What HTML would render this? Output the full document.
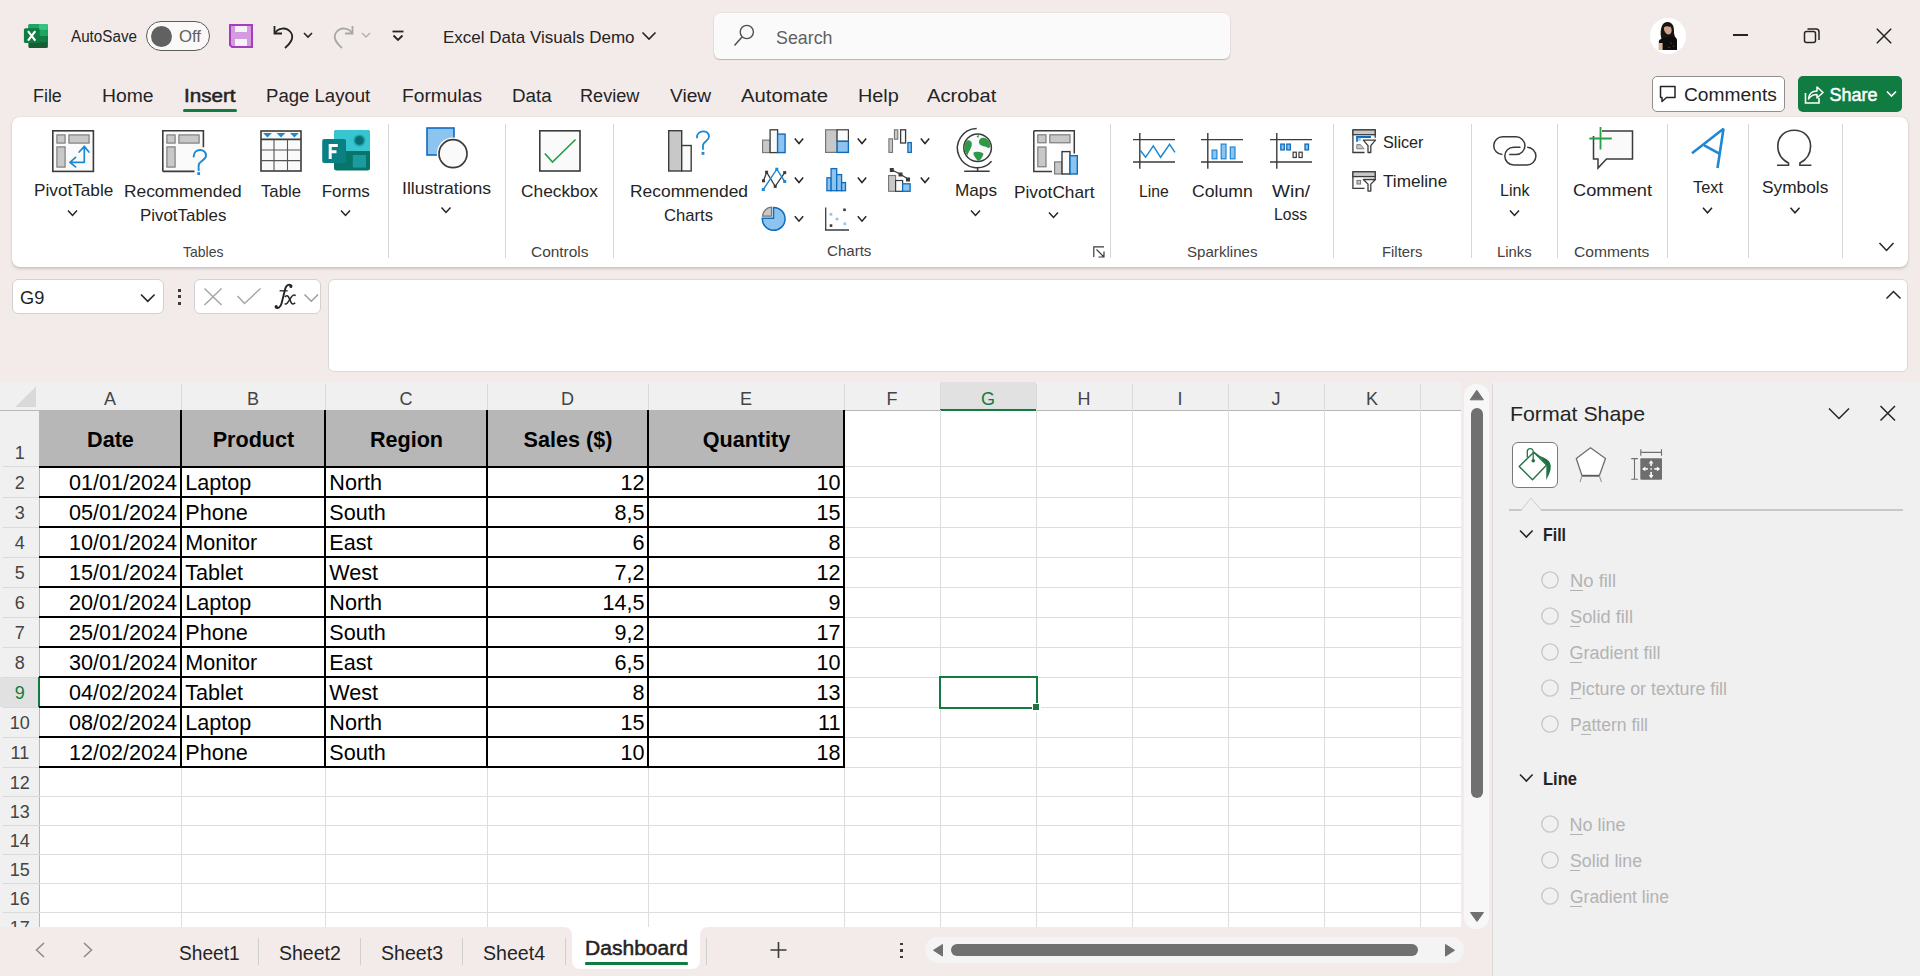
<!DOCTYPE html><html><head><meta charset="utf-8"><style>
html,body{margin:0;padding:0;}
body{width:1920px;height:976px;overflow:hidden;position:relative;background:#F3EBEA;font-family:"Liberation Sans",sans-serif;}
.a{position:absolute;}
.t{position:absolute;white-space:nowrap;line-height:1;font-family:"Liberation Sans",sans-serif;transform-origin:0 0;}
svg.full{position:absolute;left:0;top:0;}
</style></head><body>
<svg class="a" style="left:23px;top:23px;" width="26" height="26" viewBox="0 0 26 26">
<rect x="5.4" y="1" width="19.5" height="24" rx="1.6" fill="#185C37"/>
<path d="M5.4 7 V2.6 A1.6 1.6 0 0 1 7 1 H23.3 A1.6 1.6 0 0 1 24.9 2.6 V7 Z" fill="#33C481"/>
<path d="M5.4 7 V2.6 A1.6 1.6 0 0 1 7 1 H16 V7 Z" fill="#21A366"/>
<rect x="5.4" y="6.9" width="19.5" height="6.2" fill="#21A366"/>
<rect x="5.4" y="13" width="19.5" height="6.3" fill="#107C41"/>
<rect x="0.9" y="5.2" width="15.8" height="14.8" rx="1.6" fill="#107C41"/>
<path d="M5 8.2 L12.3 17.6 M12.3 8.2 L5 17.6" stroke="#fff" stroke-width="2.2" fill="none"/>
</svg><div class="t" style="left:71.00px;top:28.65px;font-size:16px;color:#242424;transform:scaleX(0.9513);">AutoSave</div><div class="a" style="left:146px;top:21px;width:62px;height:28px;border:1px solid #5c5c5c;border-radius:15px;background:#fbf8f8"></div><div class="a" style="left:151px;top:25.5px;width:21px;height:21px;background:#616161;border-radius:50%"></div><div class="t" style="left:179.00px;top:28.65px;font-size:16px;color:#616161;transform:scaleX(1.0454);">Off</div><svg class="a" style="left:229px;top:24px;" width="24" height="24" viewBox="0 0 24 24">
<path d="M1 1 H23 V23 H3 L1 21 Z" fill="#D59BE0" stroke="#A43FBB" stroke-width="2"/>
<rect x="6" y="2" width="12" height="6" fill="#f6f0f7"/>
<rect x="6" y="15" width="12" height="7" fill="#f6f0f7"/>
</svg><svg class="a" style="left:272px;top:23px;" width="26" height="26" viewBox="0 0 26 26"><path d="M2.5 3 V10.5 H10" stroke="#242424" stroke-width="1.8" fill="none"/>
<path d="M3 10.2 C6 5 14 3.5 18.5 9 C22 13.5 20 19 13 25" stroke="#242424" stroke-width="1.8" fill="none"/></svg><svg class="a" style="left:303px;top:31px;" width="10" height="8" viewBox="0 0 10 8"><path d="M1 2 L5 6 L9 2" stroke="#242424" stroke-width="1.6" fill="none"/></svg><svg class="a" style="left:329px;top:23px;" width="26" height="26" viewBox="0 0 26 26"><path d="M23.5 3 V10.5 H16" stroke="#a8a8a8" stroke-width="1.8" fill="none"/>
<path d="M23 10.2 C20 5 12 3.5 7.5 9 C4 13.5 6 19 13 25" stroke="#a8a8a8" stroke-width="1.8" fill="none"/></svg><svg class="a" style="left:361px;top:31px;" width="10" height="8" viewBox="0 0 10 8"><path d="M1 2 L5 6 L9 2" stroke="#b0b0b0" stroke-width="1.4" fill="none"/></svg><svg class="a" style="left:391px;top:30px;" width="14" height="13" viewBox="0 0 14 13"><path d="M1.5 1.5 H12.5" stroke="#242424" stroke-width="1.8"/><path d="M2.5 5.5 L7 10 L11.5 5.5" stroke="#242424" stroke-width="1.8" fill="none"/></svg><div class="t" style="left:443.00px;top:28.51px;font-size:17px;color:#242424;">Excel Data Visuals Demo</div><svg class="a" style="left:641px;top:31px;" width="16" height="10" viewBox="0 0 16 10"><path d="M1.5 1.5 L8 8 L14.5 1.5" stroke="#242424" stroke-width="1.6" fill="none"/></svg><div class="a" style="left:713.5px;top:12.5px;width:516.5px;height:46.5px;background:#FAFAFA;border-radius:6px;box-shadow:0 1px 1px rgba(0,0,0,0.22),0 0 0 0.5px rgba(0,0,0,0.08)"></div><svg class="a" style="left:732px;top:23px;" width="24" height="26" viewBox="0 0 24 26"><circle cx="14.8" cy="9" r="6.6" stroke="#505050" stroke-width="1.4" fill="none"/><path d="M10 14 L2.5 22.5" stroke="#505050" stroke-width="1.5"/></svg><div class="t" style="left:775.80px;top:27.71px;font-size:19px;color:#616161;transform:scaleX(0.9386);">Search</div><div class="a" style="left:1650px;top:18px;width:36px;height:36px;background:#fff;border-radius:50%"></div><svg class="a" style="left:1650px;top:18px;" width="36" height="36" viewBox="0 0 36 36">
<path d="M11 19 C10 12 11.5 4.5 17 4 C22.5 3.5 24.5 9 24 15 C24.5 18 25.5 20 26 22 L12 23 Z" fill="#1a1412"/>
<ellipse cx="17.8" cy="11.3" rx="3.7" ry="5.3" transform="rotate(-18 17.8 11.3)" fill="#d0a38c"/>
<path d="M13.5 6.5 C15 4.8 18.5 4.6 20.5 6.5 L20 9 C18 8 15.5 8 13.8 9.5 Z" fill="#1a1412"/>
<path d="M8.9 32 V23 C9.5 21 12 20.5 15 20 L19.5 18.3 C23 18 27 18.5 27 22.5 V32 Z" fill="#0e0c0c"/>
<rect x="8.9" y="25" width="3.7" height="7" fill="#dcb490"/>
<circle cx="21" cy="25" r="0.6" fill="#8a6a3a"/><circle cx="23.5" cy="28" r="0.6" fill="#8a6a3a"/><circle cx="19" cy="29.5" r="0.6" fill="#8a6a3a"/>
</svg><div class="a" style="left:1732.5px;top:34px;width:15px;height:1.6px;background:#242424"></div><svg class="a" style="left:1803px;top:27px;" width="18" height="18" viewBox="0 0 18 18"><rect x="1.5" y="4.5" width="11" height="11" rx="2" stroke="#242424" stroke-width="1.5" fill="none"/><path d="M4.5 2 H13 A3 3 0 0 1 16 5 V13" stroke="#242424" stroke-width="1.5" fill="none"/></svg><svg class="a" style="left:1876px;top:28px;" width="16" height="16" viewBox="0 0 16 16"><path d="M0.8 0.8 L15.2 15.2 M15.2 0.8 L0.8 15.2" stroke="#242424" stroke-width="1.5"/></svg><div class="t" style="left:32.90px;top:87.46px;font-size:18px;color:#242424;transform:scaleX(0.9930);">File</div><div class="t" style="left:101.70px;top:87.46px;font-size:18px;color:#242424;transform:scaleX(1.0747);">Home</div><div class="t" style="left:184.00px;top:87.46px;font-size:18px;color:#242424;transform:scaleX(1.1463);-webkit-text-stroke:0.5px #242424;">Insert</div><div class="t" style="left:265.80px;top:87.46px;font-size:18px;color:#242424;transform:scaleX(1.0309);">Page Layout</div><div class="t" style="left:402.00px;top:87.46px;font-size:18px;color:#242424;transform:scaleX(1.0665);">Formulas</div><div class="t" style="left:511.50px;top:87.46px;font-size:18px;color:#242424;transform:scaleX(1.0442);">Data</div><div class="t" style="left:580.40px;top:87.46px;font-size:18px;color:#242424;transform:scaleX(1.0065);">Review</div><div class="t" style="left:670.00px;top:87.46px;font-size:18px;color:#242424;transform:scaleX(1.0649);">View</div><div class="t" style="left:741.00px;top:87.46px;font-size:18px;color:#242424;transform:scaleX(1.1293);">Automate</div><div class="t" style="left:857.80px;top:87.46px;font-size:18px;color:#242424;transform:scaleX(1.1022);">Help</div><div class="t" style="left:927.00px;top:87.46px;font-size:18px;color:#242424;transform:scaleX(1.1172);">Acrobat</div><div class="a" style="left:183px;top:109px;width:54px;height:3px;background:#107C41;border-radius:2px"></div><div class="a" style="left:1652.4px;top:76.3px;width:133px;height:35.5px;box-sizing:border-box;border:1px solid #8f8f8f;border-radius:5px;background:#fff"></div><svg class="a" style="left:1659px;top:85px;" width="18" height="18" viewBox="0 0 18 18"><path d="M1.5 1.5 H16 V12.5 H7.5 L3 16.5 V12.5 H1.5 Z" stroke="#242424" stroke-width="1.5" fill="none" stroke-linejoin="round"/></svg><div class="t" style="left:1683.90px;top:86.36px;font-size:18px;color:#242424;transform:scaleX(1.0665);">Comments</div><div class="a" style="left:1798.2px;top:76.3px;width:103.6px;height:35.5px;background:#107C41;border-radius:5px"></div><svg class="a" style="left:1803px;top:84px;" width="21" height="21" viewBox="0 0 21 21"><path d="M2.5 9 V19 H16 V14" stroke="#fff" stroke-width="1.6" fill="none"/>
<path d="M5.5 15 C6 9 10 7 14 7 V3 L20 8.5 L14 14 V10.5 C10.5 10.5 7.5 12 5.5 15 Z" stroke="#fff" stroke-width="1.5" fill="none" stroke-linejoin="round"/></svg><div class="t" style="left:1829.60px;top:86.36px;font-size:18px;color:#fff;-webkit-text-stroke:0.5px #fff;">Share</div><svg class="a" style="left:1886px;top:90px;" width="11" height="8" viewBox="0 0 11 8"><path d="M1 1.5 L5.5 6 L10 1.5" stroke="#fff" stroke-width="1.6" fill="none"/></svg><div class="a" style="left:12.4px;top:117px;width:1895.6px;height:150px;background:#fff;border-radius:8px;box-shadow:0 1.5px 3px rgba(0,0,0,0.16),0 0 1px rgba(0,0,0,0.12)"></div><div class="a" style="left:388.0px;top:124px;width:1px;height:134px;background:#d6d6d6"></div><div class="a" style="left:505.2px;top:124px;width:1px;height:134px;background:#d6d6d6"></div><div class="a" style="left:613.0px;top:124px;width:1px;height:134px;background:#d6d6d6"></div><div class="a" style="left:1109.9px;top:124px;width:1px;height:134px;background:#d6d6d6"></div><div class="a" style="left:1333.1px;top:124px;width:1px;height:134px;background:#d6d6d6"></div><div class="a" style="left:1470.8px;top:124px;width:1px;height:134px;background:#d6d6d6"></div><div class="a" style="left:1557.0px;top:124px;width:1px;height:134px;background:#d6d6d6"></div><div class="a" style="left:1667.1px;top:124px;width:1px;height:134px;background:#d6d6d6"></div><div class="a" style="left:1748.0px;top:124px;width:1px;height:134px;background:#d6d6d6"></div><div class="a" style="left:1842.2px;top:124px;width:1px;height:134px;background:#d6d6d6"></div><div class="t" style="left:33.70px;top:182.11px;font-size:17px;color:#242424;transform:scaleX(1.0111);">PivotTable</div><div class="t" style="left:123.80px;top:182.61px;font-size:17px;color:#242424;transform:scaleX(1.0211);">Recommended</div><div class="t" style="left:139.60px;top:206.61px;font-size:17px;color:#242424;transform:scaleX(0.9939);">PivotTables</div><div class="t" style="left:261.00px;top:182.61px;font-size:17px;color:#242424;transform:scaleX(0.9843);">Table</div><div class="t" style="left:321.70px;top:182.61px;font-size:17px;color:#242424;">Forms</div><div class="t" style="left:182.60px;top:245.22px;font-size:14.5px;color:#424242;transform:scaleX(0.9639);">Tables</div><div class="t" style="left:402.00px;top:179.61px;font-size:17px;color:#242424;transform:scaleX(1.0352);">Illustrations</div><div class="t" style="left:521.00px;top:182.61px;font-size:17px;color:#242424;transform:scaleX(1.0186);">Checkbox</div><div class="t" style="left:530.50px;top:245.32px;font-size:14.5px;color:#424242;transform:scaleX(1.0650);">Controls</div><div class="t" style="left:630.00px;top:182.61px;font-size:17px;color:#242424;transform:scaleX(1.0237);">Recommended</div><div class="t" style="left:664.00px;top:206.61px;font-size:17px;color:#242424;transform:scaleX(0.9787);">Charts</div><div class="t" style="left:955.00px;top:182.31px;font-size:17px;color:#242424;transform:scaleX(1.0104);">Maps</div><div class="t" style="left:1014.00px;top:183.91px;font-size:17px;color:#242424;transform:scaleX(1.0156);">PivotChart</div><div class="t" style="left:827.00px;top:244.22px;font-size:14.5px;color:#424242;transform:scaleX(1.0397);">Charts</div><div class="t" style="left:1139.00px;top:182.51px;font-size:17px;color:#242424;transform:scaleX(0.9257);">Line</div><div class="t" style="left:1191.70px;top:182.51px;font-size:17px;color:#242424;transform:scaleX(1.0380);">Column</div><div class="t" style="left:1272.00px;top:182.51px;font-size:17px;color:#242424;transform:scaleX(1.1176);">Win/</div><div class="t" style="left:1274.00px;top:205.61px;font-size:17px;color:#242424;transform:scaleX(0.9190);">Loss</div><div class="t" style="left:1186.50px;top:245.42px;font-size:14.5px;color:#424242;transform:scaleX(1.0414);">Sparklines</div><div class="t" style="left:1382.50px;top:133.81px;font-size:17px;color:#242424;transform:scaleX(0.9528);">Slicer</div><div class="t" style="left:1382.50px;top:172.61px;font-size:17px;color:#242424;transform:scaleX(1.0093);">Timeline</div><div class="t" style="left:1381.60px;top:245.42px;font-size:14.5px;color:#424242;transform:scaleX(1.0236);">Filters</div><div class="t" style="left:1500.00px;top:182.31px;font-size:17px;color:#242424;transform:scaleX(0.9492);">Link</div><div class="t" style="left:1496.80px;top:245.42px;font-size:14.5px;color:#424242;transform:scaleX(1.0222);">Links</div><div class="t" style="left:1573.00px;top:182.31px;font-size:17px;color:#242424;transform:scaleX(1.0722);">Comment</div><div class="t" style="left:1574.00px;top:245.42px;font-size:14.5px;color:#424242;transform:scaleX(1.0757);">Comments</div><div class="t" style="left:1693.00px;top:179.21px;font-size:17px;color:#242424;transform:scaleX(0.9623);">Text</div><div class="t" style="left:1761.70px;top:179.21px;font-size:17px;color:#242424;transform:scaleX(1.0171);">Symbols</div><div class="a" style="left:12.3px;top:279px;width:151.4px;height:34.75px;box-sizing:border-box;background:#fff;border:1px solid #d1d1d1;border-radius:6px"></div><div class="t" style="left:19.70px;top:288.56px;font-size:18px;color:#1f1f1f;transform:scaleX(1.0121);">G9</div><div class="a" style="left:177.5px;top:288.5px;width:3px;height:3px;background:#3b3b3b"></div><div class="a" style="left:177.5px;top:295.0px;width:3px;height:3px;background:#3b3b3b"></div><div class="a" style="left:177.5px;top:301.5px;width:3px;height:3px;background:#3b3b3b"></div><div class="a" style="left:194px;top:279px;width:127.4px;height:34.75px;box-sizing:border-box;background:#fff;border:1px solid #d1d1d1;border-radius:6px"></div><div class="a" style="left:328px;top:279px;width:1580px;height:92.5px;box-sizing:border-box;background:#fff;border:1px solid #d9d9d9;border-radius:6px"></div><div class="a" style="left:0px;top:382px;width:1461px;height:28px;background:#F0F0F0"></div><div class="a" style="left:0px;top:410px;width:39px;height:517px;background:#F0F0F0"></div><div class="a" style="left:39px;top:410px;width:1422px;height:517px;background:#fff"></div><div class="a" style="left:940px;top:382px;width:96px;height:28px;background:#E1E1E1"></div><div class="a" style="left:0px;top:677px;width:39px;height:30px;background:#E1E1E1"></div><div class="a" style="left:180.5px;top:384px;width:1px;height:26px;background:#dadada"></div><div class="a" style="left:324.5px;top:384px;width:1px;height:26px;background:#dadada"></div><div class="a" style="left:486.5px;top:384px;width:1px;height:26px;background:#dadada"></div><div class="a" style="left:647.5px;top:384px;width:1px;height:26px;background:#dadada"></div><div class="a" style="left:843.5px;top:384px;width:1px;height:26px;background:#dadada"></div><div class="a" style="left:939.5px;top:384px;width:1px;height:26px;background:#dadada"></div><div class="a" style="left:1035.5px;top:384px;width:1px;height:26px;background:#dadada"></div><div class="a" style="left:1131.5px;top:384px;width:1px;height:26px;background:#dadada"></div><div class="a" style="left:1227.5px;top:384px;width:1px;height:26px;background:#dadada"></div><div class="a" style="left:1323.5px;top:384px;width:1px;height:26px;background:#dadada"></div><div class="a" style="left:1419.5px;top:384px;width:1px;height:26px;background:#dadada"></div><div class="a" style="left:0px;top:409.5px;width:1461px;height:1px;background:#b8b8b8"></div><div class="a" style="left:3px;top:466.2px;width:36px;height:1px;background:#dadada"></div><div class="a" style="left:3px;top:496.5px;width:36px;height:1px;background:#dadada"></div><div class="a" style="left:3px;top:526.5px;width:36px;height:1px;background:#dadada"></div><div class="a" style="left:3px;top:556.5px;width:36px;height:1px;background:#dadada"></div><div class="a" style="left:3px;top:586.5px;width:36px;height:1px;background:#dadada"></div><div class="a" style="left:3px;top:616.5px;width:36px;height:1px;background:#dadada"></div><div class="a" style="left:3px;top:646.5px;width:36px;height:1px;background:#dadada"></div><div class="a" style="left:3px;top:676.5px;width:36px;height:1px;background:#dadada"></div><div class="a" style="left:3px;top:706.5px;width:36px;height:1px;background:#dadada"></div><div class="a" style="left:3px;top:736.5px;width:36px;height:1px;background:#dadada"></div><div class="a" style="left:3px;top:766.5px;width:36px;height:1px;background:#dadada"></div><div class="a" style="left:3px;top:796.0px;width:36px;height:1px;background:#dadada"></div><div class="a" style="left:3px;top:825.0px;width:36px;height:1px;background:#dadada"></div><div class="a" style="left:3px;top:854.0px;width:36px;height:1px;background:#dadada"></div><div class="a" style="left:3px;top:883.0px;width:36px;height:1px;background:#dadada"></div><div class="a" style="left:3px;top:912.0px;width:36px;height:1px;background:#dadada"></div><div class="a" style="left:38.5px;top:410px;width:1px;height:517px;background:#b8b8b8"></div><div class="a" style="left:940px;top:408.5px;width:96px;height:2px;background:#107C41"></div><div class="a" style="left:37.5px;top:677px;width:2px;height:30px;background:#107C41"></div><div class="a" style="left:180.5px;top:410px;width:1px;height:517px;background:#dedede"></div><div class="a" style="left:324.5px;top:410px;width:1px;height:517px;background:#dedede"></div><div class="a" style="left:486.5px;top:410px;width:1px;height:517px;background:#dedede"></div><div class="a" style="left:647.5px;top:410px;width:1px;height:517px;background:#dedede"></div><div class="a" style="left:843.5px;top:410px;width:1px;height:517px;background:#dedede"></div><div class="a" style="left:939.5px;top:410px;width:1px;height:517px;background:#dedede"></div><div class="a" style="left:1035.5px;top:410px;width:1px;height:517px;background:#dedede"></div><div class="a" style="left:1131.5px;top:410px;width:1px;height:517px;background:#dedede"></div><div class="a" style="left:1227.5px;top:410px;width:1px;height:517px;background:#dedede"></div><div class="a" style="left:1323.5px;top:410px;width:1px;height:517px;background:#dedede"></div><div class="a" style="left:1419.5px;top:410px;width:1px;height:517px;background:#dedede"></div><div class="a" style="left:39px;top:466.2px;width:1422px;height:1px;background:#dedede"></div><div class="a" style="left:39px;top:496.5px;width:1422px;height:1px;background:#dedede"></div><div class="a" style="left:39px;top:526.5px;width:1422px;height:1px;background:#dedede"></div><div class="a" style="left:39px;top:556.5px;width:1422px;height:1px;background:#dedede"></div><div class="a" style="left:39px;top:586.5px;width:1422px;height:1px;background:#dedede"></div><div class="a" style="left:39px;top:616.5px;width:1422px;height:1px;background:#dedede"></div><div class="a" style="left:39px;top:646.5px;width:1422px;height:1px;background:#dedede"></div><div class="a" style="left:39px;top:676.5px;width:1422px;height:1px;background:#dedede"></div><div class="a" style="left:39px;top:706.5px;width:1422px;height:1px;background:#dedede"></div><div class="a" style="left:39px;top:736.5px;width:1422px;height:1px;background:#dedede"></div><div class="a" style="left:39px;top:766.5px;width:1422px;height:1px;background:#dedede"></div><div class="a" style="left:39px;top:796.0px;width:1422px;height:1px;background:#dedede"></div><div class="a" style="left:39px;top:825.0px;width:1422px;height:1px;background:#dedede"></div><div class="a" style="left:39px;top:854.0px;width:1422px;height:1px;background:#dedede"></div><div class="a" style="left:39px;top:883.0px;width:1422px;height:1px;background:#dedede"></div><div class="a" style="left:39px;top:912.0px;width:1422px;height:1px;background:#dedede"></div><div class="a" style="left:39px;top:410px;width:805px;height:56.7px;background:#B7B7B7"></div><div class="a" style="left:180px;top:410px;width:2px;height:358px;background:#000"></div><div class="a" style="left:324px;top:410px;width:2px;height:358px;background:#000"></div><div class="a" style="left:486px;top:410px;width:2px;height:358px;background:#000"></div><div class="a" style="left:647px;top:410px;width:2px;height:358px;background:#000"></div><div class="a" style="left:843px;top:410px;width:2px;height:358px;background:#000"></div><div class="a" style="left:39px;top:465.7px;width:806px;height:2px;background:#000"></div><div class="a" style="left:39px;top:496px;width:806px;height:2px;background:#000"></div><div class="a" style="left:39px;top:526px;width:806px;height:2px;background:#000"></div><div class="a" style="left:39px;top:556px;width:806px;height:2px;background:#000"></div><div class="a" style="left:39px;top:586px;width:806px;height:2px;background:#000"></div><div class="a" style="left:39px;top:616px;width:806px;height:2px;background:#000"></div><div class="a" style="left:39px;top:646px;width:806px;height:2px;background:#000"></div><div class="a" style="left:39px;top:676px;width:806px;height:2px;background:#000"></div><div class="a" style="left:39px;top:706px;width:806px;height:2px;background:#000"></div><div class="a" style="left:39px;top:736px;width:806px;height:2px;background:#000"></div><div class="a" style="left:39px;top:766px;width:806px;height:2px;background:#000"></div><div class="t" style="left:104.00px;top:389.76px;font-size:18px;color:#444444;">A</div><div class="t" style="left:247.00px;top:389.76px;font-size:18px;color:#444444;">B</div><div class="t" style="left:399.50px;top:389.76px;font-size:18px;color:#444444;">C</div><div class="t" style="left:561.00px;top:389.76px;font-size:18px;color:#444444;">D</div><div class="t" style="left:740.00px;top:389.76px;font-size:18px;color:#444444;">E</div><div class="t" style="left:886.50px;top:389.76px;font-size:18px;color:#444444;">F</div><div class="t" style="left:981.00px;top:389.76px;font-size:18px;color:#107C41;">G</div><div class="t" style="left:1077.50px;top:389.76px;font-size:18px;color:#444444;">H</div><div class="t" style="left:1177.50px;top:389.76px;font-size:18px;color:#444444;">I</div><div class="t" style="left:1271.50px;top:389.76px;font-size:18px;color:#444444;">J</div><div class="t" style="left:1366.00px;top:389.76px;font-size:18px;color:#444444;">K</div><div class="t" style="left:14.80px;top:443.96px;font-size:18px;color:#444444;">1</div><div class="t" style="left:14.80px;top:474.26px;font-size:18px;color:#444444;">2</div><div class="t" style="left:14.80px;top:504.26px;font-size:18px;color:#444444;">3</div><div class="t" style="left:14.80px;top:534.26px;font-size:18px;color:#444444;">4</div><div class="t" style="left:14.80px;top:564.26px;font-size:18px;color:#444444;">5</div><div class="t" style="left:14.80px;top:594.26px;font-size:18px;color:#444444;">6</div><div class="t" style="left:14.80px;top:624.26px;font-size:18px;color:#444444;">7</div><div class="t" style="left:14.80px;top:654.26px;font-size:18px;color:#444444;">8</div><div class="t" style="left:14.80px;top:684.26px;font-size:18px;color:#107C41;">9</div><div class="t" style="left:9.79px;top:714.26px;font-size:18px;color:#444444;">10</div><div class="t" style="left:10.46px;top:744.26px;font-size:18px;color:#444444;">11</div><div class="t" style="left:9.79px;top:773.76px;font-size:18px;color:#444444;">12</div><div class="t" style="left:9.79px;top:802.76px;font-size:18px;color:#444444;">13</div><div class="t" style="left:9.79px;top:831.76px;font-size:18px;color:#444444;">14</div><div class="t" style="left:9.79px;top:860.76px;font-size:18px;color:#444444;">15</div><div class="t" style="left:9.79px;top:889.76px;font-size:18px;color:#444444;">16</div><div class="t" style="left:9.79px;top:918.76px;font-size:18px;color:#444444;">17</div><div class="t" style="left:87.09px;top:428.71px;font-size:21.6px;color:#000;font-weight:bold;">Date</div><div class="t" style="left:212.70px;top:428.71px;font-size:21.6px;color:#000;font-weight:bold;">Product</div><div class="t" style="left:369.90px;top:428.71px;font-size:21.6px;color:#000;font-weight:bold;">Region</div><div class="t" style="left:523.58px;top:428.71px;font-size:21.6px;color:#000;font-weight:bold;">Sales ($)</div><div class="t" style="left:702.70px;top:428.71px;font-size:21.6px;color:#000;font-weight:bold;">Quantity</div><div class="t" style="left:68.91px;top:472.31px;font-size:21.6px;color:#000;">01/01/2024</div><div class="t" style="left:185.30px;top:472.31px;font-size:21.6px;color:#000;">Laptop</div><div class="t" style="left:329.30px;top:472.31px;font-size:21.6px;color:#000;">North</div><div class="t" style="left:620.48px;top:472.31px;font-size:21.6px;color:#000;">12</div><div class="t" style="left:816.48px;top:472.31px;font-size:21.6px;color:#000;">10</div><div class="t" style="left:68.91px;top:502.31px;font-size:21.6px;color:#000;">05/01/2024</div><div class="t" style="left:185.30px;top:502.31px;font-size:21.6px;color:#000;">Phone</div><div class="t" style="left:329.30px;top:502.31px;font-size:21.6px;color:#000;">South</div><div class="t" style="left:614.48px;top:502.31px;font-size:21.6px;color:#000;">8,5</div><div class="t" style="left:816.48px;top:502.31px;font-size:21.6px;color:#000;">15</div><div class="t" style="left:68.91px;top:532.31px;font-size:21.6px;color:#000;">10/01/2024</div><div class="t" style="left:185.30px;top:532.31px;font-size:21.6px;color:#000;">Monitor</div><div class="t" style="left:329.30px;top:532.31px;font-size:21.6px;color:#000;">East</div><div class="t" style="left:632.49px;top:532.31px;font-size:21.6px;color:#000;">6</div><div class="t" style="left:828.49px;top:532.31px;font-size:21.6px;color:#000;">8</div><div class="t" style="left:68.91px;top:562.31px;font-size:21.6px;color:#000;">15/01/2024</div><div class="t" style="left:185.30px;top:562.31px;font-size:21.6px;color:#000;">Tablet</div><div class="t" style="left:329.30px;top:562.31px;font-size:21.6px;color:#000;">West</div><div class="t" style="left:614.48px;top:562.31px;font-size:21.6px;color:#000;">7,2</div><div class="t" style="left:816.48px;top:562.31px;font-size:21.6px;color:#000;">12</div><div class="t" style="left:68.91px;top:592.31px;font-size:21.6px;color:#000;">20/01/2024</div><div class="t" style="left:185.30px;top:592.31px;font-size:21.6px;color:#000;">Laptop</div><div class="t" style="left:329.30px;top:592.31px;font-size:21.6px;color:#000;">North</div><div class="t" style="left:602.46px;top:592.31px;font-size:21.6px;color:#000;">14,5</div><div class="t" style="left:828.49px;top:592.31px;font-size:21.6px;color:#000;">9</div><div class="t" style="left:68.91px;top:622.31px;font-size:21.6px;color:#000;">25/01/2024</div><div class="t" style="left:185.30px;top:622.31px;font-size:21.6px;color:#000;">Phone</div><div class="t" style="left:329.30px;top:622.31px;font-size:21.6px;color:#000;">South</div><div class="t" style="left:614.48px;top:622.31px;font-size:21.6px;color:#000;">9,2</div><div class="t" style="left:816.48px;top:622.31px;font-size:21.6px;color:#000;">17</div><div class="t" style="left:68.91px;top:652.31px;font-size:21.6px;color:#000;">30/01/2024</div><div class="t" style="left:185.30px;top:652.31px;font-size:21.6px;color:#000;">Monitor</div><div class="t" style="left:329.30px;top:652.31px;font-size:21.6px;color:#000;">East</div><div class="t" style="left:614.48px;top:652.31px;font-size:21.6px;color:#000;">6,5</div><div class="t" style="left:816.48px;top:652.31px;font-size:21.6px;color:#000;">10</div><div class="t" style="left:68.91px;top:682.31px;font-size:21.6px;color:#000;">04/02/2024</div><div class="t" style="left:185.30px;top:682.31px;font-size:21.6px;color:#000;">Tablet</div><div class="t" style="left:329.30px;top:682.31px;font-size:21.6px;color:#000;">West</div><div class="t" style="left:632.49px;top:682.31px;font-size:21.6px;color:#000;">8</div><div class="t" style="left:816.48px;top:682.31px;font-size:21.6px;color:#000;">13</div><div class="t" style="left:68.91px;top:712.31px;font-size:21.6px;color:#000;">08/02/2024</div><div class="t" style="left:185.30px;top:712.31px;font-size:21.6px;color:#000;">Laptop</div><div class="t" style="left:329.30px;top:712.31px;font-size:21.6px;color:#000;">North</div><div class="t" style="left:620.48px;top:712.31px;font-size:21.6px;color:#000;">15</div><div class="t" style="left:818.08px;top:712.31px;font-size:21.6px;color:#000;">11</div><div class="t" style="left:68.91px;top:742.31px;font-size:21.6px;color:#000;">12/02/2024</div><div class="t" style="left:185.30px;top:742.31px;font-size:21.6px;color:#000;">Phone</div><div class="t" style="left:329.30px;top:742.31px;font-size:21.6px;color:#000;">South</div><div class="t" style="left:620.48px;top:742.31px;font-size:21.6px;color:#000;">10</div><div class="t" style="left:816.48px;top:742.31px;font-size:21.6px;color:#000;">18</div><div class="a" style="left:939px;top:676px;width:99px;height:33px;box-sizing:border-box;border:2px solid #107C41"></div><div class="a" style="left:1031.5px;top:702.5px;width:9px;height:9px;background:#fff"></div><div class="a" style="left:1033px;top:704px;width:6px;height:6px;background:#217346"></div><div class="a" style="left:1464px;top:384px;width:25px;height:545px;background:#F7F7F7;border-radius:12px"></div><div class="a" style="left:1471px;top:408px;width:12px;height:390px;background:#707070;border-radius:6px"></div><div class="a" style="left:0px;top:927px;width:1462px;height:49px;background:#F3EBEA"></div><div class="t" style="left:178.75px;top:942.57px;font-size:20px;color:#242424;transform:scaleX(0.9584);">Sheet1</div><div class="t" style="left:278.75px;top:942.57px;font-size:20px;color:#242424;transform:scaleX(0.9742);">Sheet2</div><div class="t" style="left:380.50px;top:942.57px;font-size:20px;color:#242424;transform:scaleX(0.9782);">Sheet3</div><div class="t" style="left:483.40px;top:942.57px;font-size:20px;color:#242424;transform:scaleX(0.9782);">Sheet4</div><div class="a" style="left:257.75px;top:937.5px;width:1px;height:27px;background:#cfcfcf"></div><div class="a" style="left:360.0px;top:937.5px;width:1px;height:27px;background:#cfcfcf"></div><div class="a" style="left:462.0px;top:937.5px;width:1px;height:27px;background:#cfcfcf"></div><div class="a" style="left:565.0px;top:937.5px;width:1px;height:27px;background:#cfcfcf"></div><div class="a" style="left:705.5px;top:937.5px;width:1px;height:27px;background:#cfcfcf"></div><svg class="a" style="left:0px;top:0px;" width="1920" height="976" viewBox="0 0 1920 976"><path d="M564 927 A8 8 0 0 1 572 935 V961 A8 8 0 0 0 580 969 H692 A8 8 0 0 0 700 961 V935 A8 8 0 0 1 708 927 Z" fill="#fff"/></svg><div class="t" style="left:585.00px;top:938.27px;font-size:20px;color:#242424;transform:scaleX(1.0528);-webkit-text-stroke:0.5px #242424;">Dashboard</div><div class="a" style="left:585px;top:962px;width:103px;height:3px;background:#107C41;border-radius:1px"></div><div class="a" style="left:899.5px;top:942.6px;width:3px;height:2.8px;background:#3b3b3b"></div><div class="a" style="left:899.5px;top:949.1px;width:3px;height:2.8px;background:#3b3b3b"></div><div class="a" style="left:899.5px;top:955.6px;width:3px;height:2.8px;background:#3b3b3b"></div><div class="a" style="left:925px;top:937.2px;width:539px;height:25.6px;background:#F4F4F4;border-radius:13px"></div><div class="a" style="left:951px;top:944px;width:467px;height:12px;background:#707070;border-radius:6px"></div><div class="a" style="left:1491.5px;top:382px;width:428.5px;height:594px;background:#F0F0F0"></div><div class="a" style="left:1491.5px;top:384px;width:1px;height:592px;background:#d8d8d8"></div><div class="t" style="left:1510.00px;top:402.72px;font-size:21px;color:#242424;transform:scaleX(1.0146);">Format Shape</div><div class="a" style="left:1512px;top:442px;width:45.8px;height:45.8px;box-sizing:border-box;background:#fff;border:1.2px solid #7a7a7a;border-radius:6px"></div><div class="t" style="left:1542.50px;top:525.21px;font-size:19px;color:#242424;font-weight:bold;transform:scaleX(0.8382);">Fill</div><div class="t" style="left:1569.50px;top:572.26px;font-size:18px;color:#b3b3b3;transform:scaleX(1.0220);">No fill</div><div class="a" style="left:1569.5px;top:589.8px;width:13px;height:1px;background:#b3b3b3"></div><div class="t" style="left:1569.50px;top:608.26px;font-size:18px;color:#b3b3b3;transform:scaleX(1.0157);">Solid fill</div><div class="a" style="left:1569.5px;top:625.8px;width:10px;height:1px;background:#b3b3b3"></div><div class="t" style="left:1569.50px;top:644.26px;font-size:18px;color:#b3b3b3;">Gradient fill</div><div class="a" style="left:1569.5px;top:661.8px;width:12px;height:1px;background:#b3b3b3"></div><div class="t" style="left:1569.50px;top:680.26px;font-size:18px;color:#b3b3b3;transform:scaleX(0.9871);">Picture or texture fill</div><div class="a" style="left:1569.5px;top:697.8px;width:11px;height:1px;background:#b3b3b3"></div><div class="t" style="left:1569.50px;top:716.26px;font-size:18px;color:#b3b3b3;transform:scaleX(0.9746);">Pattern fill</div><div class="a" style="left:1580.5px;top:733.8px;width:10px;height:1px;background:#b3b3b3"></div><div class="t" style="left:1542.80px;top:768.71px;font-size:19px;color:#242424;font-weight:bold;transform:scaleX(0.8706);">Line</div><div class="t" style="left:1569.50px;top:816.26px;font-size:18px;color:#b3b3b3;">No line</div><div class="a" style="left:1569.5px;top:833.8px;width:13px;height:1px;background:#b3b3b3"></div><div class="t" style="left:1569.50px;top:852.26px;font-size:18px;color:#b3b3b3;transform:scaleX(0.9857);">Solid line</div><div class="a" style="left:1569.5px;top:869.8px;width:10px;height:1px;background:#b3b3b3"></div><div class="t" style="left:1569.50px;top:888.26px;font-size:18px;color:#b3b3b3;transform:scaleX(0.9701);">Gradient line</div><div class="a" style="left:1569.5px;top:905.8px;width:12px;height:1px;background:#b3b3b3"></div><svg class="full" width="1920" height="976" viewBox="0 0 1920 976"><path d="M68.0 210.5 L72.5 215.5 L77.0 210.5" stroke="#242424" stroke-width="1.5" fill="none"/><path d="M341.0 210.5 L345.5 215.5 L350.0 210.5" stroke="#242424" stroke-width="1.5" fill="none"/><path d="M441.5 207.5 L446.0 212.5 L450.5 207.5" stroke="#242424" stroke-width="1.5" fill="none"/><path d="M794.8 138.5 L799.0 143.5 L803.2 138.5" stroke="#242424" stroke-width="1.5" fill="none"/><path d="M794.8 177.5 L799.0 182.5 L803.2 177.5" stroke="#242424" stroke-width="1.5" fill="none"/><path d="M794.8 216.2 L799.0 221.2 L803.2 216.2" stroke="#242424" stroke-width="1.5" fill="none"/><path d="M857.8 138.5 L862.0 143.5 L866.2 138.5" stroke="#242424" stroke-width="1.5" fill="none"/><path d="M857.8 177.5 L862.0 182.5 L866.2 177.5" stroke="#242424" stroke-width="1.5" fill="none"/><path d="M857.8 216.2 L862.0 221.2 L866.2 216.2" stroke="#242424" stroke-width="1.5" fill="none"/><path d="M920.8 138.5 L925.0 143.5 L929.2 138.5" stroke="#242424" stroke-width="1.5" fill="none"/><path d="M920.8 177.5 L925.0 182.5 L929.2 177.5" stroke="#242424" stroke-width="1.5" fill="none"/><path d="M971.0 210.5 L975.5 215.5 L980.0 210.5" stroke="#242424" stroke-width="1.5" fill="none"/><path d="M1049.0 212.5 L1053.5 217.5 L1058.0 212.5" stroke="#242424" stroke-width="1.5" fill="none"/><path d="M1093.8 257 V246.8 H1104" stroke="#3b3b3b" stroke-width="1.2" fill="none"/><path d="M1096.5 249.5 L1104 257 M1098.5 257 H1104 V251.5" stroke="#3b3b3b" stroke-width="1.2" fill="none"/><path d="M1510.0 210.5 L1514.5 215.5 L1519.0 210.5" stroke="#242424" stroke-width="1.5" fill="none"/><path d="M1703.0 207.8 L1707.5 212.8 L1712.0 207.8" stroke="#242424" stroke-width="1.5" fill="none"/><path d="M1790.5 207.8 L1795.0 212.8 L1799.5 207.8" stroke="#242424" stroke-width="1.5" fill="none"/><path d="M1879.5 243 L1886.5 250.5 L1893.5 243" stroke="#242424" stroke-width="1.5" fill="none"/><rect x="52.8" y="130.8" width="40.6" height="40.6" fill="#fafafa" stroke="#3b3b3b" stroke-width="1.6"/><rect x="56.9" y="134.9" width="8.2" height="8.2" fill="#c8c8c8" stroke="#757575" stroke-width="1.1"/><rect x="68.9" y="134.9" width="20.2" height="8.2" fill="#c8c8c8" stroke="#757575" stroke-width="1.1"/><rect x="56.9" y="146.9" width="8.2" height="20.2" fill="#c8c8c8" stroke="#757575" stroke-width="1.1"/><path d="M84.3 146.4 V162.3 H69.9 M79.15 152 L84.3 146.4 L88.9 152 M75.6 157.4 L69.9 162.3 L75.6 166.9" stroke="#1E88D3" stroke-width="1.7" fill="none" stroke-linecap="round" stroke-linejoin="round"/><path d="M162.8 130.8 H203.4 V171.4 H162.8 V130.8 Z" fill="#fafafa"/><path d="M162.8 171.4 V130.8 H203.4 V147.2 M162.8 171.4 H194.5" stroke="#3b3b3b" stroke-width="1.6" fill="none"/><rect x="166.9" y="134.9" width="8.2" height="8.2" fill="#c8c8c8" stroke="#757575" stroke-width="1.1"/><rect x="178.9" y="134.9" width="20.2" height="8.2" fill="#c8c8c8" stroke="#757575" stroke-width="1.1"/><rect x="166.9" y="146.9" width="8.2" height="20.2" fill="#c8c8c8" stroke="#757575" stroke-width="1.1"/><path d="M193.7 156.6 C193.7 148 206 148 206 155.5 C206 159.5 200.5 161 199 164 C198.5 165.5 198.5 168 198.7 170" stroke="#1E88D3" stroke-width="2" fill="none" stroke-linecap="round"/><rect x="197.3" y="172.2" width="2.8" height="2.8" fill="#1E88D3"/><rect x="261" y="131" width="40" height="40" fill="#fafafa" stroke="#3b3b3b" stroke-width="1.6"/><path d="M261 139.4 H301" stroke="#3b3b3b" stroke-width="1.6"/><path d="M261 150 H301 M261 160.6 H301 M274 139.4 V171 M287.5 139.4 V171" stroke="#555" stroke-width="1.1"/><path d="M263.1 133 H271.9 L267.5 137.6 Z" fill="#1E88D3"/><path d="M276.6 133 H285.4 L281.0 137.6 Z" fill="#1E88D3"/><path d="M290.0 133 H298.8 L294.4 137.6 Z" fill="#1E88D3"/><rect x="334" y="130" width="36" height="40.5" rx="2.5" fill="#077568"/><path d="M334 151 V132.5 A2.5 2.5 0 0 1 336.5 130 H367.5 A2.5 2.5 0 0 1 370 132.5 V151 Z" fill="#37C6D0"/><circle cx="359.4" cy="140.4" r="6" fill="#1FA3AC"/><circle cx="359.4" cy="140.4" r="4.3" fill="#0B6E72"/><rect x="352.8" y="155" width="13.2" height="12.6" fill="#1A9BA1"/><rect x="322.2" y="139.1" width="23.8" height="23.8" rx="2" fill="#0A7F84"/><path d="M330.2 159 V145.5 H337.8 M330.2 151.8 H336.5" stroke="#fff" stroke-width="3" fill="none"/><rect x="427" y="128" width="27" height="27" fill="#8DC3EF" stroke="#0F6CBD" stroke-width="1.6"/><circle cx="453" cy="153.7" r="16.2" fill="#fff"/><circle cx="453" cy="153.7" r="14" fill="#fafafa" stroke="#3b3b3b" stroke-width="1.7"/><rect x="539.8" y="130.8" width="40.2" height="40.2" fill="#fafafa" stroke="#3b3b3b" stroke-width="1.6"/><path d="M544.8 153.5 L552.5 162 L575.5 139.5" stroke="#2C9E4A" stroke-width="1.7" fill="none"/><rect x="668.7" y="130.7" width="13" height="40.3" fill="#c8c8c8" stroke="#3b3b3b" stroke-width="1.4"/><rect x="681.7" y="145.5" width="9.5" height="25.5" fill="#fafafa" stroke="#3b3b3b" stroke-width="1.4"/><path d="M697 137.5 C697 129.5 709 129.5 709 136.5 C709 140.5 704 141.5 703 145 V149" stroke="#1E88D3" stroke-width="1.8" fill="none" stroke-linecap="round"/><rect x="701.6" y="152" width="2.8" height="2.8" fill="#1E88D3"/><rect x="762.6" y="140.1" width="7.5" height="12.5" fill="#c8c8c8" stroke="#757575" stroke-width="1.1"/><rect x="770.1" y="129.8" width="7.5" height="22.8" fill="#fafafa" stroke="#3b3b3b" stroke-width="1.3"/><rect x="777.6" y="134.1" width="7.5" height="18.5" fill="#8DC3EF" stroke="#0F6CBD" stroke-width="1.4"/><rect x="825.6" y="129.8" width="11.5" height="22.6" fill="#c8c8c8" stroke="#757575" stroke-width="1.2"/><rect x="837.1" y="129.8" width="11.3" height="11.5" fill="#fafafa" stroke="#3b3b3b" stroke-width="1.2"/><rect x="837.1" y="141.3" width="11.3" height="11.1" fill="#8DC3EF" stroke="#0F6CBD" stroke-width="1.4"/><rect x="888.9" y="138.8" width="3.6" height="13.6" fill="#c8c8c8" stroke="#757575" stroke-width="1.1"/><rect x="894.4" y="129.8" width="3.4" height="9.4" fill="#c8c8c8" stroke="#757575" stroke-width="1.1"/><rect x="900.6" y="129.8" width="5" height="13.2" fill="#fafafa" stroke="#3b3b3b" stroke-width="1.3"/><rect x="907.9" y="142.6" width="3.4" height="9.8" fill="#8DC3EF" stroke="#0F6CBD" stroke-width="1.3"/><path d="M763.5 180.8 L766.6 172.2 L775.2 186.4 L784.7 172.6" stroke="#3b3b3b" stroke-width="1.3" fill="none"/><rect x="762" y="179.3" width="3" height="3" fill="#3b3b3b"/><rect x="765.1" y="170.7" width="3" height="3" fill="#3b3b3b"/><rect x="773.7" y="184.9" width="3" height="3" fill="#3b3b3b"/><rect x="783.2" y="171.1" width="3" height="3" fill="#3b3b3b"/><path d="M763.3 189.5 L776.8 169.2 L784.7 181.5" stroke="#1E88D3" stroke-width="1.4" fill="none"/><rect x="761.8" y="188" width="3" height="3" fill="#1E88D3"/><rect x="775.3" y="167.7" width="3" height="3" fill="#1E88D3"/><rect x="783.2" y="180" width="3" height="3" fill="#1E88D3"/><rect x="826.9" y="177.8" width="4.2" height="12.9" fill="#8DC3EF" stroke="#0F6CBD" stroke-width="1.3"/><rect x="831.1" y="168.6" width="5.6" height="22.1" fill="#8DC3EF" stroke="#0F6CBD" stroke-width="1.3"/><rect x="836.7" y="174.6" width="4.9" height="16.1" fill="#8DC3EF" stroke="#0F6CBD" stroke-width="1.3"/><rect x="841.6" y="182.6" width="3.9" height="8.1" fill="#8DC3EF" stroke="#0F6CBD" stroke-width="1.3"/><rect x="888.6" y="175.5" width="7" height="15.8" fill="#c8c8c8" stroke="#757575" stroke-width="1.1"/><rect x="895.6" y="180.5" width="7" height="10.8" fill="#fafafa" stroke="#3b3b3b" stroke-width="1.2"/><rect x="902.6" y="183.8" width="7.5" height="7.5" fill="#8DC3EF" stroke="#0F6CBD" stroke-width="1.3"/><path d="M892 170 L900 174 L908 179" stroke="#3b3b3b" stroke-width="1.3" fill="none"/><rect x="889.8" y="168" width="4" height="4" fill="#3b3b3b"/><rect x="898.5" y="172.5" width="4" height="4" fill="#3b3b3b"/><rect x="906" y="177.5" width="4" height="4" fill="#3b3b3b"/><path d="M773.5 218.2 V207.5 A11.4 11.4 0 1 1 762.3 218.2 Z" fill="#8DC3EF" stroke="#0F6CBD" stroke-width="1.5"/><path d="M771.5 216.2 H762.5 A9.5 9.5 0 0 1 771.5 207.2 Z" fill="#c8c8c8" stroke="#757575" stroke-width="1.2"/><path d="M825.7 207.5 V230 H849" stroke="#3b3b3b" stroke-width="1.3" fill="none"/><rect x="843.2" y="208.5" width="2.6" height="2.6" fill="#3b3b3b"/><rect x="829.7" y="224.3" width="2.6" height="2.6" fill="#3b3b3b"/><rect x="829.5" y="213" width="2.8" height="2.6" fill="#8DC3EF"/><circle cx="837" cy="219" r="1.6" fill="#8DC3EF"/><rect x="843.5" y="222.5" width="2.6" height="2.6" fill="#8DC3EF"/><circle cx="977.6" cy="147.7" r="13.8" fill="#fafafa" stroke="#3b3b3b" stroke-width="1.5"/><path d="M976.7 128.5 A19.6 19.6 0 1 0 991.6 161.2" stroke="#3b3b3b" stroke-width="1.5" fill="none"/><path d="M977.6 167.3 V171.3 M964.2 171.3 H989.7" stroke="#3b3b3b" stroke-width="1.5" fill="none"/><path d="M964.5 146 C965 141 968 138 971.5 142 C973 147 969 150 967.5 155.5 C965 153 964 150 964.5 146 Z" fill="#2E9A48"/><path d="M979 142 C979 137 986 136 989.5 142 C991 146 990 150 986.5 147 C982 146 979 145 979 142 Z" fill="#2E9A48"/><path d="M973.5 152.5 C976 151 982 151.5 983.5 154 C982 158 980 161 978 161 C975.5 158 973 155 973.5 152.5 Z" fill="#2E9A48"/><path d="M976.5 136.5 L978.8 134.5 L978.5 138 Z" fill="#2E9A48"/><path d="M1033.8 130.8 H1074.3 V153.5 M1033.8 130.8 V171.4 H1052" stroke="#3b3b3b" stroke-width="1.5" fill="#fafafa"/><rect x="1037.8" y="134.8" width="8.2" height="8" fill="#c8c8c8" stroke="#757575" stroke-width="1.1"/><rect x="1049.8" y="134.8" width="20.2" height="8" fill="#c8c8c8" stroke="#757575" stroke-width="1.1"/><rect x="1037.8" y="147" width="8.2" height="19.8" fill="#c8c8c8" stroke="#757575" stroke-width="1.1"/><rect x="1054.6" y="161.9" width="7.4" height="12.1" fill="#c8c8c8" stroke="#757575" stroke-width="1.1"/><rect x="1062" y="151.6" width="8" height="22.4" fill="#fafafa" stroke="#3b3b3b" stroke-width="1.4"/><rect x="1070" y="155.7" width="7.3" height="18.3" fill="#8DC3EF" stroke="#0F6CBD" stroke-width="1.4"/><path d="M1133.0 139.6 H1175.0 M1133.0 162 H1175.0 M1139.8 133.1 V168.8" stroke="#3b3b3b" stroke-width="1.4"/><path d="M1201.0 139.6 H1243.0 M1201.0 162 H1243.0 M1207.8 133.1 V168.8" stroke="#3b3b3b" stroke-width="1.4"/><path d="M1270.0 139.6 H1312.0 M1270.0 162 H1312.0 M1276.8 133.1 V168.8" stroke="#3b3b3b" stroke-width="1.4"/><path d="M1140.4 150.5 L1145.6 157.3 L1153.3 145.8 L1160.6 157.3 L1169.6 144.3 L1175 152.3" stroke="#1E88D3" stroke-width="1.5" fill="none"/><rect x="1212.1" y="150.1" width="4.8" height="8.7" fill="#8DC3EF" stroke="#1E88D3" stroke-width="1.2"/><rect x="1221.2" y="144.1" width="4.8" height="14.7" fill="#8DC3EF" stroke="#1E88D3" stroke-width="1.2"/><rect x="1230.3" y="147.0" width="4.7" height="11.8" fill="#8DC3EF" stroke="#1E88D3" stroke-width="1.2"/><rect x="1280.8" y="144.1" width="3.5" height="5.8" fill="#8DC3EF" stroke="#0F6CBD" stroke-width="1.3"/><rect x="1286.8" y="144.1" width="3.5" height="5.8" fill="#8DC3EF" stroke="#0F6CBD" stroke-width="1.3"/><rect x="1305.0" y="144.1" width="3.5" height="5.8" fill="#8DC3EF" stroke="#0F6CBD" stroke-width="1.3"/><rect x="1293.1" y="152.2" width="3.2" height="5.3" fill="#fafafa" stroke="#3b3b3b" stroke-width="1.2"/><rect x="1299.0" y="152.2" width="3.2" height="5.3" fill="#fafafa" stroke="#3b3b3b" stroke-width="1.2"/><path d="M1352.9 129.9 H1375.2 V137.7 M1352.9 129.9 V152.5 H1364.5" stroke="#3b3b3b" stroke-width="1.3" fill="#fafafa"/><rect x="1352.9" y="129.9" width="22.3" height="4.8" fill="#c8c8c8" stroke="#3b3b3b" stroke-width="1.3"/><path d="M1363.3 140.2 H1375.5 L1370.8 145.7 V152.5 H1368 V145.7 Z" fill="#fafafa" stroke="#3b3b3b" stroke-width="1.3" stroke-linejoin="round"/><path d="M1357 141.8 V137 H1371" stroke="#0F6CBD" stroke-width="1.8" fill="none"/><rect x="1357.8" y="137.8" width="3" height="3" fill="#8DC3EF"/><path d="M1356.8 148.8 V144.6 H1360.5 L1364 148.8 Z" fill="#c8c8c8" stroke="#757575" stroke-width="0.9"/><path d="M1352.9 171.8 H1375.2 V179.6 M1352.9 171.8 V188.4 H1364.5" stroke="#3b3b3b" stroke-width="1.3" fill="#fafafa"/><rect x="1352.9" y="171.8" width="22.3" height="4.8" fill="#c8c8c8" stroke="#3b3b3b" stroke-width="1.3"/><path d="M1363.3 179.5 H1375.5 L1370.8 184.1 V191.1 H1368 V184.1 Z" fill="#fafafa" stroke="#3b3b3b" stroke-width="1.3" stroke-linejoin="round"/><rect x="1357" y="180.4" width="3.6" height="3.6" fill="#c8c8c8" stroke="#757575" stroke-width="1"/><path d="M1502.4 154.6 A8.9 8.9 0 0 1 1502.9 136.8 H1516 A8.9 8.9 0 0 1 1516 154.6 H1509.2" stroke="#3b3b3b" stroke-width="1.5" fill="none"/><path d="M1520.5 147.2 H1513.7 A8.9 8.9 0 0 0 1513.7 165 H1526.8 A8.9 8.9 0 0 0 1527.2 147.2" stroke="#3b3b3b" stroke-width="1.5" fill="none"/><path d="M1593.5 136 V159 H1598 V168 L1606.5 159 H1632.5 V131 H1602" stroke="#3b3b3b" stroke-width="1.5" fill="#fafafa" stroke-linejoin="miter"/><path d="M1600.5 127 V149.5 M1589.4 138.5 H1611.8" stroke="#2C9E4A" stroke-width="1.8"/><path d="M1692 153.2 L1723.5 128.8 L1717.5 168 M1704.2 145.4 L1718.9 153.4" stroke="#1E88D3" stroke-width="2.6" fill="none" stroke-linejoin="bevel"/><path d="M1777 165.2 H1788.5 V163 C1781.5 159.5 1777.8 153 1777.8 146 C1777.8 136.5 1784.8 130.3 1794.2 130.3 C1803.6 130.3 1810.6 136.5 1810.6 146 C1810.6 153 1806.9 159.5 1799.9 163 V165.2 H1811.4" stroke="#3b3b3b" stroke-width="1.6" fill="none"/><path d="M141 294.5 L147.8 301.3 L154.6 294.5" stroke="#242424" stroke-width="1.6" fill="none"/><path d="M204.5 288.5 L221.5 305 M221.5 288.5 L204.5 305" stroke="#a6a6a6" stroke-width="1.5"/><path d="M237.5 296 L244.5 303.5 L260.5 288.5" stroke="#a6a6a6" stroke-width="1.5" fill="none"/><path d="M291.8 286.2 C290.5 284 286.5 284 285.3 288.5 L281.6 303.3 C280.6 307.6 277.8 308.8 275.6 307.4" stroke="#242424" stroke-width="1.9" fill="none"/><circle cx="290.9" cy="286.6" r="1.5" fill="#242424"/><circle cx="276.2" cy="306.7" r="1.6" fill="#242424"/><path d="M279.6 290.8 H287.6" stroke="#242424" stroke-width="1.3"/><path d="M284.8 297 C286.3 295 288 295.4 288.9 297.6 L291.2 302.6 C292 304.4 293.6 304.5 295.2 302.8" stroke="#242424" stroke-width="1.5" fill="none"/><path d="M295.6 295.6 C294.2 294.4 292.8 295 291.6 296.6 L288 302.2 C287 303.9 285.8 304.4 284.6 303.6" stroke="#242424" stroke-width="1.4" fill="none"/><path d="M304.5 294.5 L311.3 301.3 L318.1 294.5" stroke="#9a9a9a" stroke-width="1.4" fill="none"/><path d="M1886.5 298.5 L1893.5 291.5 L1900.5 298.5" stroke="#242424" stroke-width="1.5" fill="none"/><path d="M15.4 406.9 H36 V386.6 Z" fill="#d9d9d9"/><path d="M1470.2 399.8 L1476.8 390.2 L1483.4 399.8 Z" fill="#707070" stroke="#707070" stroke-width="1" stroke-linejoin="round"/><path d="M1470.5 912.5 L1483.5 912.5 L1477 921.5 Z" fill="#707070" stroke="#707070" stroke-width="1" stroke-linejoin="round"/><path d="M37 943 L44.5 950 L37 957" stroke="#8a8a8a" stroke-width="1.5" fill="none" transform="translate(81,0) scale(-1,1) translate(-0,0)"/><path d="M84 943 L91.5 950 L84 957" stroke="#8a8a8a" stroke-width="1.5" fill="none"/><path d="M778.5 942 V958 M770.5 950 H786.5" stroke="#3b3b3b" stroke-width="1.6"/><path d="M942.5 944.5 L933.5 950.3 L942.5 956.1 Z" fill="#707070" stroke="#707070" stroke-width="1" stroke-linejoin="round"/><path d="M1445.5 944.5 L1454.5 950.3 L1445.5 956.1 Z" fill="#707070" stroke="#707070" stroke-width="1" stroke-linejoin="round"/><path d="M1829 408.5 L1839 418.5 L1849 408.5" stroke="#242424" stroke-width="1.5" fill="none"/><path d="M1880.5 406 L1895 420.5 M1895 406 L1880.5 420.5" stroke="#242424" stroke-width="1.5"/><path d="M1519.2 466.4 L1533.8 452.3 L1546.6 465.1 L1532.5 479.7 Z" stroke="#217346" stroke-width="1.4" fill="none" stroke-linejoin="round"/><path d="M1527.3 457.5 V451.5 A2.95 2.95 0 0 1 1533.2 451.5 V460.5" stroke="#217346" stroke-width="1.3" fill="none"/><circle cx="1533.3" cy="460.7" r="1.8" fill="#217346"/><path d="M1533.8 452.3 L1541 457.5" stroke="#217346" stroke-width="1.4"/><path d="M1539.5 456.2 C1546 457.5 1551 461 1550.8 467 C1550.6 472 1548.5 475.5 1546.2 480 L1546.4 465.5 Z" fill="#217346"/><path d="M1590.5 447.8 L1605.5 458.5 L1599.3 475.7 H1582 L1576.3 458.5 Z" stroke="#6e6e6e" stroke-width="1.3" fill="#fff" stroke-linejoin="round"/><path d="M1582 475.7 H1599.3" stroke="#5a5a5a" stroke-width="1.8"/><path d="M1582 475.7 L1580 482 M1599.3 475.7 L1601.5 482" stroke="#9a9a9a" stroke-width="1.1"/><path d="M1640.8 449.2 V455.8 M1661.5 449.2 V455.8 M1640.8 452.4 H1661.5 M1631.2 458.6 H1637.9 M1634.5 458.6 V479.3 M1631.2 479.3 H1637.9" stroke="#6e6e6e" stroke-width="1.1" fill="none"/><rect x="1640.3" y="458.2" width="21.7" height="21.5" rx="1" fill="#6e6e6e"/><path d="M1651.1 460.2 L1653.5 463.5 H1648.7 Z M1651.1 478.4 L1653.5 475.1 H1648.7 Z M1642.1 468.9 L1645.4 466.5 V471.3 Z M1660.2 468.9 L1656.9 466.5 V471.3 Z" fill="#fff"/><rect x="1650.3" y="463.3" width="1.6" height="2.6" fill="#fff"/><rect x="1650.3" y="471.9" width="1.6" height="3.3" fill="#fff"/><rect x="1645.3" y="468.1" width="2.6" height="1.6" fill="#fff"/><rect x="1654.3" y="468.1" width="2.7" height="1.6" fill="#fff"/><rect x="1650.4" y="468.2" width="1.5" height="1.5" fill="#fff"/><path d="M1509 510 H1521.5 M1541 510 H1903" stroke="#c8c8c8" stroke-width="1.8" fill="none"/><path d="M1521.5 510 L1531 498 L1541 510" stroke="#cdcdcd" stroke-width="1" fill="none"/><path d="M1520 530.5 L1526.3 537 L1532.6 530.5" stroke="#242424" stroke-width="1.6" fill="none"/><circle cx="1550" cy="580.0" r="8.2" stroke="#c6c6c6" stroke-width="1.3" fill="none"/><circle cx="1550" cy="616.0" r="8.2" stroke="#c6c6c6" stroke-width="1.3" fill="none"/><circle cx="1550" cy="652.0" r="8.2" stroke="#c6c6c6" stroke-width="1.3" fill="none"/><circle cx="1550" cy="688.0" r="8.2" stroke="#c6c6c6" stroke-width="1.3" fill="none"/><circle cx="1550" cy="724.0" r="8.2" stroke="#c6c6c6" stroke-width="1.3" fill="none"/><path d="M1520 774.5 L1526.3 781 L1532.6 774.5" stroke="#242424" stroke-width="1.6" fill="none"/><circle cx="1550" cy="824.0" r="8.2" stroke="#c6c6c6" stroke-width="1.3" fill="none"/><circle cx="1550" cy="860.0" r="8.2" stroke="#c6c6c6" stroke-width="1.3" fill="none"/><circle cx="1550" cy="896.0" r="8.2" stroke="#c6c6c6" stroke-width="1.3" fill="none"/></svg></body></html>
